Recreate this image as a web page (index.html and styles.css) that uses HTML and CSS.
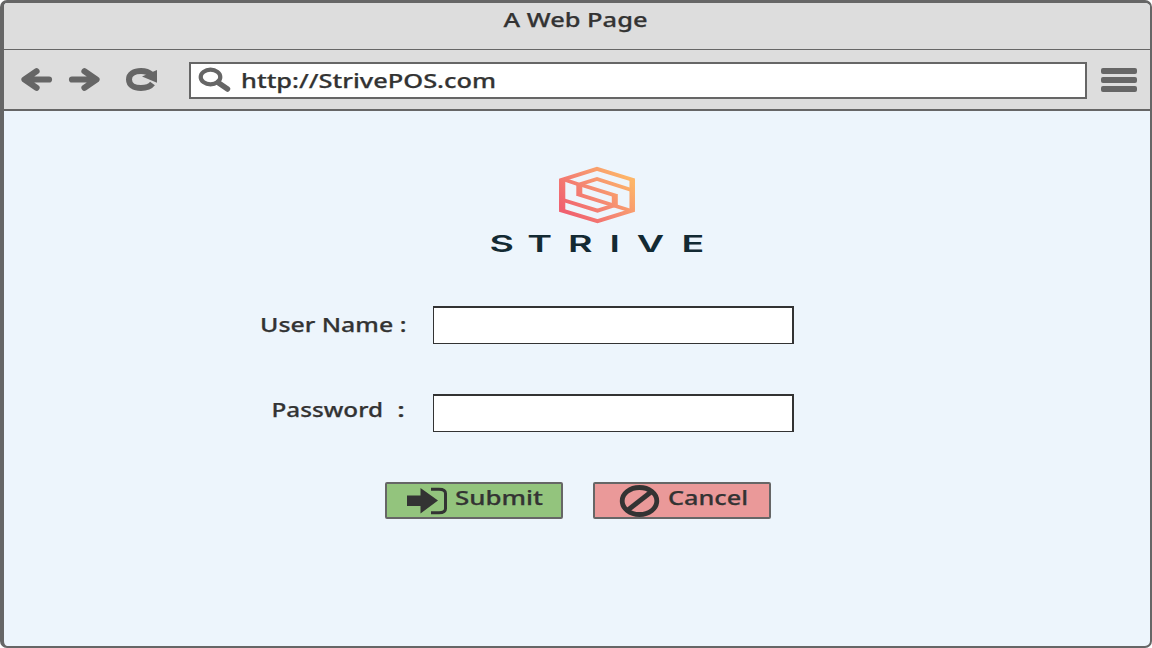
FILE: index.html
```
<!DOCTYPE html>
<html lang="en">
<head>
<meta charset="utf-8">
<title>A Web Page</title>
<link rel="stylesheet" href="styles.css">
</head>
<body>
<div class="window">
  <header class="titlebar">
    <svg class="label" width="148" height="30" viewBox="0 0 148 30"><text x="2.500" y="24" textLength="144" lengthAdjust="spacingAndGlyphs">A Web Page</text></svg>
  </header>
  <nav class="toolbar">
    <svg class="nav-icons" width="140" height="26" viewBox="20 67 140 26">
      <g fill="none" stroke="#666" stroke-width="6.200" stroke-linecap="round" stroke-linejoin="round">
        <path d="M49 79.500H26M36.500 71.300L24.500 79.500L36.500 87.700"/>
        <path d="M72 79.500H95M84.500 71.300L96.500 79.500L84.500 87.700"/>
      </g>
      <path d="M22 79.500L33.500 72V87ZM99 79.500L87.500 72V87Z" fill="#666"/>
      <path d="M152.500 83.500C149.500 87.500 145.500 88 141 88C134 88 129 85 129 79.500C129 74 134 71 141 71C145.500 71 149 72.300 151.500 74.500" fill="none" stroke="#666" stroke-width="6"/>
      <path d="M157 70V82.800L142 76.500Z" fill="#666"/>
    </svg>
    <div class="address">
      <svg width="34" height="26" viewBox="197 66 34 26" fill="none" stroke="#666">
        <ellipse cx="210.500" cy="77" rx="9.800" ry="7.300" stroke-width="4.200"/>
        <path d="M218 82.500L227.500 89" stroke-width="5.500" stroke-linecap="round"/>
      </svg>
      <svg class="label" width="270" height="30" viewBox="0 0 270 30"><text x="10" y="22" textLength="255" lengthAdjust="spacingAndGlyphs">http://StrivePOS.com</text></svg>
    </div>
    <div class="menu"><i></i><i></i><i></i></div>
  </nav>
  <main class="page">
    <svg class="logo" width="260" height="100" viewBox="468 164 260 100">
      <defs>
        <linearGradient id="warm" gradientUnits="userSpaceOnUse" x1="572" y1="219" x2="622" y2="171">
          <stop offset="0" stop-color="#f0606f"/><stop offset=".5" stop-color="#f58a72"/><stop offset="1" stop-color="#fdb568"/>
        </linearGradient>
      </defs>
      <g fill="none" stroke="url(#warm)" stroke-width="3.900">
        <path d="M561 180.200L597 168.900L633 180V210.200L597.500 221.100L561 210.200Z"/>
        <path d="M564 179.500L579 184.500L597 179L633 190.500"/>
        <path d="M579 184.500V194.500L630 210.500"/>
        <path d="M580 184.500L615 195.500V205L597.500 210.700L563 200"/>
        <path d="M562.300 180V210" stroke-width="6"/>
        <path d="M632.200 180V210" stroke-width="5.500"/>
        <path d="M579.300 183V196M614.800 194V207" stroke-width="6"/>
      </g>
      <text class="wordmark" transform="scale(1.6 1)" y="252" x="306 329.600 355 381 398 426">STRIVE</text>
    </svg>
    <form class="login">
      <div class="field">
        <svg class="label" width="180" height="38" viewBox="253 306 180 38"><text x="260" y="332" textLength="146.500" lengthAdjust="spacingAndGlyphs">User Name :</text></svg>
        <div class="input"></div>
      </div>
      <div class="field">
        <svg class="label" width="180" height="38" viewBox="253 394 180 38"><text x="271.500" y="417" textLength="111.500" lengthAdjust="spacingAndGlyphs">Password</text><text x="397" y="417" textLength="8" lengthAdjust="spacingAndGlyphs">:</text></svg>
        <div class="input"></div>
      </div>
      <div class="actions">
        <div class="button submit">
          <svg class="label" width="174" height="33" viewBox="387 484 174 33">
            <path d="M407 495.500H420.500V488L438 500.500L420.500 513.500V506H407Z" fill="#333"/>
            <path d="M431 489.200H439Q445.500 489.200 445.500 493.500V508.500Q445.500 512.800 439 512.800H431" fill="none" stroke="#333" stroke-width="3"/>
            <text x="455" y="505" textLength="88" lengthAdjust="spacingAndGlyphs">Submit</text>
          </svg>
        </div>
        <div class="button cancel">
          <svg class="label" width="174" height="33" viewBox="595 484 174 33">
            <ellipse cx="639.500" cy="501" rx="17.300" ry="13.500" fill="none" stroke="#333" stroke-width="4.800"/>
            <path d="M628 510L651 492" stroke="#333" stroke-width="4.800"/>
            <text x="668" y="505" textLength="80" lengthAdjust="spacingAndGlyphs">Cancel</text>
          </svg>
        </div>
      </div>
    </form>
  </main>
</div>
</body>
</html>
```
FILE: styles.css
```
* { box-sizing: border-box; }
body { margin: 0; background: #fff; }
svg { display: block; flex: none; }
.window {
  width: 1152px;
  height: 648px;
  border: solid #666;
  border-width: 3px 2px 2px 4px;
  border-radius: 7px;
  background: #edf5fc;
  overflow: hidden;
}
.label { font: 500 20.5px "Noto Sans", sans-serif; fill: #333; }
.label text { stroke: #333; stroke-width: .25px; }
.titlebar {
  height: 47px;
  padding-left: 497px;
  background: #ddd;
  border-bottom: 1px solid #666;
}
.toolbar {
  display: flex;
  height: 61px;
  padding: 12px 13px 0 16px;
  background: #ddd;
  border-bottom: 2px solid #666;
}
.nav-icons { margin-top: 5px; }
.address {
  display: flex;
  width: 898px;
  height: 37px;
  margin-left: 29px;
  padding: 2px 0 0 6px;
  border: 2px solid #666;
  background: #fff;
}
.menu {
  display: flex;
  flex-direction: column;
  gap: 3px;
  width: 36px;
  margin: 6px 0 0 14px;
}
.menu i { height: 6px; border-radius: 2px; background: #666; }
.page { padding-top: 53px; }
.logo { margin-left: 464px; overflow: visible; }
.wordmark { font: 600 23.5px Inter, sans-serif; fill: #132a33; }
.login { width: 545px; margin: 42px 0 0 249px; }
.field { display: flex; height: 38px; margin-bottom: 50px; }
.input { width: 361px; border: solid #333; border-width: 2px 2px 1px 1px; background: #fff; }
.actions { display: flex; gap: 30px; padding-left: 132px; }
.button { width: 178px; height: 37px; border: 2px solid #666; border-radius: 2px; }
.submit { background: #93c47d; }
.cancel { background: #ea9999; }
```
